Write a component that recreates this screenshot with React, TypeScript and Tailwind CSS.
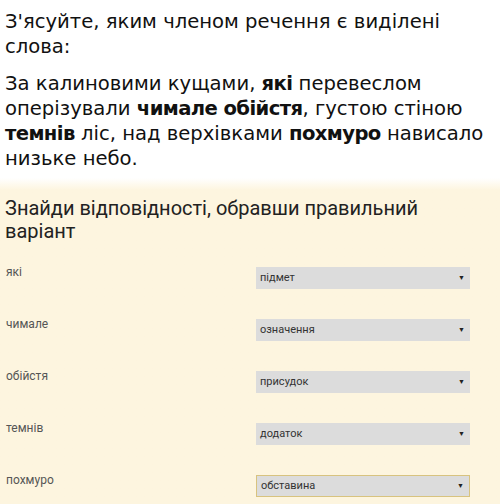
import React from 'react';

const rows = [
  { word: 'які', answer: 'підмет' },
  { word: 'чимале', answer: 'означення' },
  { word: 'обійстя', answer: 'присудок' },
  { word: 'темнів', answer: 'додаток' },
  { word: 'похмуро', answer: 'обставина', focused: true },
];

function Select({ value, focused }: { value: string; focused?: boolean }) {
  return (
    <div
      className={
        'flex h-[22px] w-[214px] items-center justify-between bg-[#dcdcdc] pl-[4px] pr-[5px] text-[11px] text-[#333] ' +
        (focused ? 'border border-[#d8c37f]' : '')
      }
    >
      <span>{value}</span>
      <span className="text-[7px] text-[#222]">▼</span>
    </div>
  );
}

export default function App() {
  return (
    <div className="h-[504px] w-[500px] overflow-hidden bg-white">
      <div className="whitespace-nowrap px-[5px] pt-[9px] font-['DejaVu_Sans',sans-serif] text-[19.6px] leading-[25px] text-[#111]">
        <p>
          З'ясуйте, яким членом речення є виділені
          <br />
          слова:
        </p>
        <p className="mt-[12px]">
          За калиновими кущами, <b className="tracking-[-0.6px]">які</b> перевеслом
          <br />
          оперізували <b className="tracking-[-0.6px]">чимале обійстя</b>, густою стіною
          <br />
          <b className="tracking-[-0.6px]">темнів</b> ліс, над верхівками <b className="tracking-[-0.6px]">похмуро</b> нависало
          <br />
          низьке небо.
        </p>
      </div>
      <div className="mt-[7px] bg-gradient-to-b from-[#ffffff] to-[#fdf5df] to-[12px] pb-[10px] pt-[19px]">
        <h2 className="whitespace-nowrap px-[5px] font-['Roboto',sans-serif] text-[20px] leading-[23px] text-[#222]">
          Знайди відповідності, обравши правильний
          <br />
          варіант
        </h2>
        <div className="mt-[24px] flex flex-col gap-[30px] font-['Roboto',sans-serif]">
          {rows.map((r) => (
            <div key={r.word} className="flex items-start">
              <div className="-mt-[2px] w-[256px] pl-[6px] text-[12px] leading-[14px] text-[#555]">{r.word}</div>
              <Select value={r.answer} focused={r.focused} />
            </div>
          ))}
        </div>
      </div>
    </div>
  );
}
